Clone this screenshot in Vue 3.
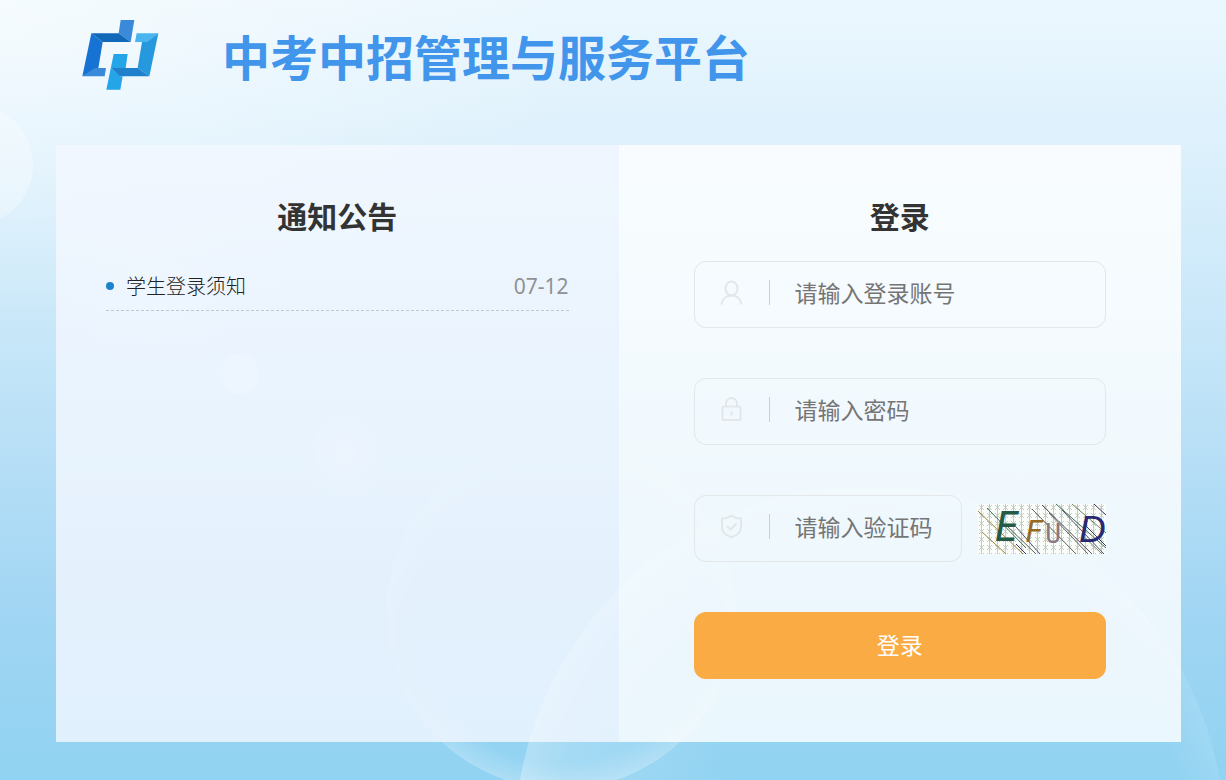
<script setup>
import { ref } from 'vue'

const notices = ref([{ title: '学生登录须知', date: '07-12' }])
const account = ref('')
const password = ref('')
const code = ref('')
</script>

<template>
  <div class="page">
    <svg class="backdrop" viewBox="0 0 1226 780" preserveAspectRatio="xMidYMid slice" aria-hidden="true">
      <defs>
        <linearGradient id="sky" x1="0" y1="0" x2="0" y2="1">
          <stop offset="0" stop-color="#ebf7fe" />
          <stop offset="0.2" stop-color="#dcf0fc" />
          <stop offset="0.4" stop-color="#cae8f9" />
          <stop offset="0.6" stop-color="#b5def6" />
          <stop offset="0.8" stop-color="#9fd5f3" />
          <stop offset="1" stop-color="#91d3f2" />
        </linearGradient>
        <radialGradient id="glow">
          <stop offset="0" stop-color="#fff" stop-opacity="0.75" />
          <stop offset="1" stop-color="#fff" stop-opacity="0" />
        </radialGradient>
        <radialGradient id="bubble">
          <stop offset="0.84" stop-color="#fff" stop-opacity="0" />
          <stop offset="1" stop-color="#fff" stop-opacity="1" />
        </radialGradient>
        <linearGradient id="bubbleFade" x1="0" y1="0" x2="0" y2="1">
          <stop offset="0" stop-color="#fff" stop-opacity="0.1" />
          <stop offset="0.7" stop-color="#fff" stop-opacity="0.14" />
          <stop offset="1" stop-color="#fff" stop-opacity="0.28" />
        </linearGradient>
        <mask id="bubbleMask">
          <circle cx="561" cy="614" r="175" fill="url(#bubble)" />
        </mask>
        <linearGradient id="dome" x1="0" y1="0" x2="1" y2="0">
          <stop offset="0" stop-color="#fff" stop-opacity="0.22" />
          <stop offset="0.3" stop-color="#fff" stop-opacity="0" />
        </linearGradient>
        <radialGradient id="domeRim">
          <stop offset="0.88" stop-color="#fff" stop-opacity="0" />
          <stop offset="1" stop-color="#fff" stop-opacity="0.1" />
        </radialGradient>
      </defs>
      <rect width="1226" height="780" fill="url(#sky)" />
      <ellipse cx="0" cy="30" rx="600" ry="290" fill="url(#glow)" opacity="0.7" />
      <circle cx="-28" cy="165" r="61" fill="#fff" opacity="0.3" />
      <circle cx="155" cy="290" r="90" fill="url(#glow)" opacity="0.2" />
      <circle cx="239" cy="374" r="20" fill="#fff" opacity="0.25" />
      <circle cx="345" cy="455" r="45" fill="url(#glow)" opacity="0.45" />
      <circle cx="561" cy="614" r="175" fill="url(#bubbleFade)" mask="url(#bubbleMask)" />
      <circle cx="870" cy="840" r="355" fill="url(#dome)" />
      <circle cx="870" cy="840" r="355" fill="url(#domeRim)" />
    </svg>

    <header class="header">
      <svg class="logo" viewBox="60 54 240 222" aria-hidden="true">
        <path fill="#3a8ad9" d="M182 60H223L212 126L176 100Z" />
        <path fill="#1268b8" d="M94 100H176L212 126H128Z" />
        <path fill="#1673d3" d="M94 100L128 126L115 205L67 229Z" />
        <path fill="#3a8ad9" d="M67 229L105 204H138L134 229Z" />
        <path fill="#4ab4ee" d="M230 100H295L262 126H225Z" />
        <path fill="#2698de" d="M295 100L268 229L233 204L246 126H261Z" />
        <path fill="#2080cb" d="M154 204H233L268 229H178Z" />
        <path fill="#24a5e8" d="M161 162H203L197 204H154L180 229H188L181 269H139Z" />
      </svg>
      <h1 class="brand">中考中招管理与服务平台</h1>
    </header>

    <main class="card">
      <section class="panel notices">
        <h2 class="heading">通知公告</h2>
        <ul class="list">
          <li v-for="n in notices" :key="n.title" class="item">
            <a class="link" href="#">{{ n.title }}</a>
            <time class="date">{{ n.date }}</time>
          </li>
        </ul>
      </section>

      <section class="panel login">
        <h2 class="heading">登录</h2>
        <form class="form" @submit.prevent>
          <label class="field">
            <svg class="icon" viewBox="0 0 24 24" aria-hidden="true">
              <ellipse cx="12.5" cy="7.5" rx="6" ry="7" />
              <path d="M2.5 23.5C3.2 18 7 14.5 12.5 14.5S21.5 18 22.5 23.5" />
            </svg>
            <input v-model="account" class="input" type="text" placeholder="请输入登录账号" aria-label="登录账号" />
          </label>
          <label class="field">
            <svg class="icon" viewBox="0 0 24 24" aria-hidden="true">
              <rect x="3.5" y="8.500" width="18" height="13.5" rx="1.5" />
              <path d="M7 8.5V5.5A5.5 5.5 0 0 1 18 5.5V8.5M12.5 13V17.5" />
            </svg>
            <input v-model="password" class="input" type="password" placeholder="请输入密码" aria-label="密码" />
          </label>
          <div class="row">
            <label class="field">
              <svg class="icon" viewBox="0 0 24 24" aria-hidden="true">
                <path d="M12.5 0.5C9.5 2.8 6.5 3.5 3 3.5V12C3 17.5 7 20.5 12.5 22.2C18 20.5 22 17.5 22 12V3.5C18.5 3.5 15.5 2.8 12.5 0.5Z" />
                <path d="M8 11L11.5 14.5L17.5 8.5" />
              </svg>
              <input v-model="code" class="input" type="text" placeholder="请输入验证码" aria-label="验证码" />
            </label>
            <svg class="captcha" viewBox="0 0 128 50" role="img" aria-label="验证码图片">
              <defs>
                <pattern id="stars" width="8" height="8" patternUnits="userSpaceOnUse">
                  <path d="M3.5 0V8M1 1L6 6M6 1L1 6" stroke="#b4c2b2" stroke-width="0.8" fill="none" />
                </pattern>
              </defs>
              <rect width="128" height="50" fill="#fbfdfa" />
              <rect width="128" height="50" fill="url(#stars)" />
              <g fill="none" stroke-width="1">
                <path stroke="#9c8442" d="M0 7L45 50M4 28L28 50" />
                <path stroke="#3c7058" d="M9 4L48 44M78 0L128 44" />
                <path stroke="#55506c" d="M38 23L62 50M64 1L114 50M84 6L126 50" />
                <path stroke="#62625c" d="M28 21L58 50M54 5L98 50M71 9L110 50" />
                <path stroke="#3c3562" d="M106 20L128 42M116 0L128 11M38 40L48 50" />
                <path stroke="#6c8b64" d="M94 0L128 29M104 31L124 50" />
              </g>
              <g font-family="'DejaVu Sans Mono', monospace">
                <text x="17" y="37" font-size="40" font-style="italic" fill="#245b46">E</text>
                <text x="47" y="38" font-size="30" font-style="italic" fill="#976927">F</text>
                <text x="67" y="39" font-size="27" fill="#8a7881">U</text>
                <text x="101" y="38" font-size="37" font-style="italic" fill="#292872" font-family="'Liberation Sans', Arial, sans-serif">D</text>
              </g>
            </svg>
          </div>
          <button class="submit" type="submit">登录</button>
        </form>
      </section>
    </main>
  </div>
</template>

<style>
body {
  margin: 0;
}
</style>

<style scoped>
.page {
  position: relative;
  box-sizing: border-box;
  display: flex;
  flex-direction: column;
  min-height: 100vh;
  padding: 0 45px 38px 56px;
  font-family: "Noto Sans", "Noto Sans CJK SC", sans-serif;
  color: #333;
}
.backdrop {
  position: absolute;
  inset: 0;
  z-index: -1;
  width: 100%;
  height: 100%;
}
.header {
  display: flex;
  align-items: center;
  gap: 62px;
  height: 110px;
  margin-bottom: 35px;
  padding-left: 24px;
}
.logo {
  width: 80px;
  height: 74px;
}
.brand {
  margin: 0;
  padding-top: 6px;
  font-size: 48px;
  line-height: 64px;
  font-weight: 700;
  color: #4196ec;
}
.card {
  flex: 1;
  display: grid;
  grid-template-columns: repeat(2, minmax(0, 1fr));
}
.panel {
  padding-top: 48px;
}
.notices {
  padding-left: 50px;
  padding-right: 50px;
  background: rgba(244, 247, 255, 0.8);
}
.login {
  padding-left: 75px;
  padding-right: 75px;
  background: rgba(255, 255, 255, 0.8);
}
.heading {
  margin: 0;
  font-size: 30px;
  line-height: 48px;
  text-align: center;
}
.list {
  margin: 20px 0 0;
  padding: 0;
  list-style: none;
}
.item {
  display: flex;
  align-items: center;
  height: 49px;
  border-bottom: 1px dashed #c4c8cc;
}
.item::before {
  content: "";
  width: 8px;
  height: 8px;
  margin-right: 12px;
  border-radius: 50%;
  background: #1a84cb;
}
.link {
  flex: 1;
  font-size: 20px;
  font-weight: 300;
  color: #222;
  text-decoration: none;
}
.date {
  font-size: 21px;
  color: #8f9194;
}
.form {
  display: flex;
  flex-direction: column;
  gap: 50px;
  margin-top: 19px;
}
.row {
  display: flex;
  align-items: center;
  gap: 16px;
}
.field {
  box-sizing: border-box;
  display: flex;
  flex: 1;
  align-items: center;
  min-width: 0;
  min-height: 67px;
  padding: 0 24px 4px;
  border: 1px solid #e4e6e8;
  border-radius: 12px;
}
.icon {
  flex: none;
  width: 24px;
  height: 24px;
  overflow: visible;
  fill: none;
  stroke: #e3e7e9;
  stroke-width: 2;
}
.field::before {
  content: "";
  order: 1;
  width: 1px;
  height: 25px;
  margin: 0 25px 0 26px;
  background: #cccfd1;
}
.input {
  order: 2;
  flex: 1;
  min-width: 0;
  height: 40px;
  padding: 0;
  border: 0;
  outline: 0;
  background: transparent;
  font: inherit;
  font-size: 23px;
  color: #333;
}
.input::placeholder {
  color: #757575;
  opacity: 1;
}
.captcha {
  flex: none;
  width: 128px;
  height: 50px;
}
.submit {
  height: 67px;
  padding: 0 0 4px;
  border: 0;
  border-radius: 12px;
  background: #fbab44;
  font: inherit;
  font-size: 23px;
  color: #fff;
  cursor: pointer;
}
.form {
  margin-top: 20px;
}
</style>
